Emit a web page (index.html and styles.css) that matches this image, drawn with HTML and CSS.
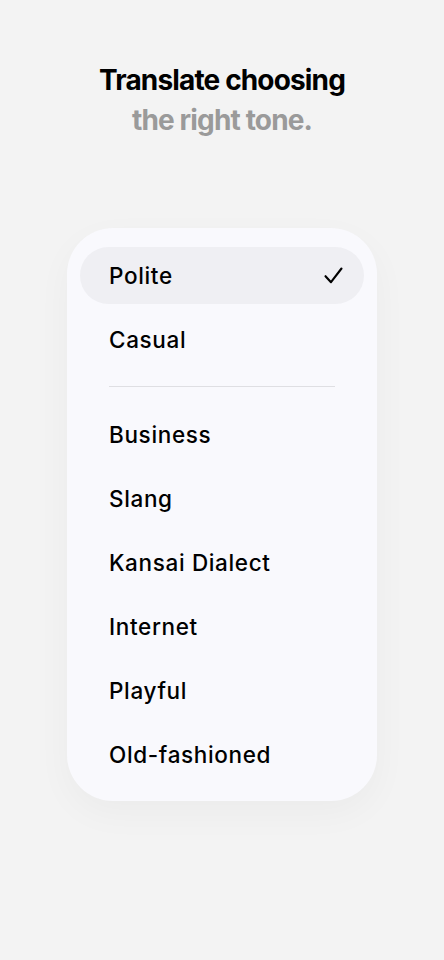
FILE: index.html
```html
<!DOCTYPE html>
<html lang="en">
<head>
<meta charset="utf-8">
<title>Tone</title>
<link rel="stylesheet" href="styles.css">
</head>
<body>
<header class="hero">
  <h1 class="hero-title">Translate choosing<br><span class="hero-sub">the right tone.</span></h1>
</header>
<main class="card">
  <ul class="group">
    <li class="row row-selected"><span class="label">Polite</span><svg class="check" width="19" height="17" viewBox="0 0 19 17" aria-hidden="true"><path d="M1.5 9.2 L7 15.2 L17.5 1.5" fill="none" stroke="#000" stroke-width="2.1" stroke-linecap="round" stroke-linejoin="round"/></svg></li>
    <li class="row"><span class="label">Casual</span></li>
  </ul>
  <hr class="divider">
  <ul class="group">
    <li class="row"><span class="label">Business</span></li>
    <li class="row"><span class="label">Slang</span></li>
    <li class="row"><span class="label">Kansai Dialect</span></li>
    <li class="row"><span class="label">Internet</span></li>
    <li class="row"><span class="label">Playful</span></li>
    <li class="row"><span class="label">Old-fashioned</span></li>
  </ul>
</main>
</body>
</html>
```
FILE: styles.css
```css
* { box-sizing: border-box; }
html, body { margin: 0; padding: 0; }
body {
  background: #f3f3f3;
  font-family: Inter, "Noto Sans", sans-serif;
  color: #000;
  width: 444px;
  min-height: 960px;
}
.hero {
  padding-top: 60px;
  text-align: center;
}
.hero-title {
  margin: 0;
  font-size: 28px;
  line-height: 40px;
  font-weight: 700;
  letter-spacing: -0.85px;
}
.hero-sub { color: #9a9a9a; }
.card {
  width: 310px;
  margin: 88px auto 0;
  background: #f9f9fd;
  border-radius: 46px;
  padding: 19px 13px 18px;
  box-shadow: 0 12px 36px rgba(0,0,0,0.035);
}
.group {
  list-style: none;
  margin: 0;
  padding: 0;
  display: flex;
  flex-direction: column;
  gap: 7px;
}
.row {
  height: 57px;
  display: flex;
  align-items: center;
  justify-content: space-between;
  padding: 0 21px 0 29px;
  border-radius: 29px;
  font-size: 22.5px;
  font-weight: 500;
  letter-spacing: 0.65px;
}
.row-selected { background: #efeff3; }
.check { display: block; margin-top: -1px; }
.divider {
  border: 0;
  height: 1px;
  background: #dfdfe3;
  margin: 18px 29px 19px;
}
```
